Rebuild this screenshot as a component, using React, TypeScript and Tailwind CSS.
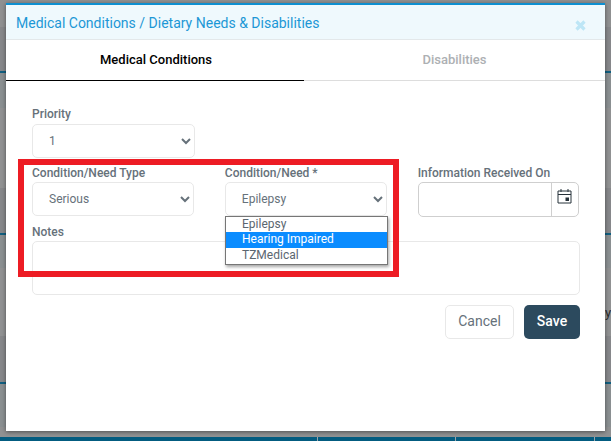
const bands = [
  { h: 'h-[27px]', bg: 'bg-[#8f9091]' },
  { h: 'h-[44px]', bg: 'bg-[#86878a]' },
  { h: 'h-[2px]', bg: 'bg-[#115f80]' },
  { h: 'h-[35px]', bg: 'bg-[#8a8f91]' },
  { h: 'h-[80px]', bg: 'bg-[#909192]' },
  { h: 'h-[45px]', bg: 'bg-[#86878a]' },
  { h: 'h-[2px]', bg: 'bg-[#115f80]' },
  { h: 'h-[33px]', bg: 'bg-[#8a8f91]' },
  { h: 'h-[68px]', bg: 'bg-[#909192]' },
  { h: 'h-[46px]', bg: 'bg-[#86878a]' },
  { h: 'h-[2px]', bg: 'bg-[#115f80]' },
  { h: 'h-[43px]', bg: 'bg-[#8a8f91]' },
  { h: 'h-[10px]', bg: 'bg-[#909192]' },
]

const labelClass = 'block h-[18px] leading-[18px] font-medium'
const selectClass = 'block w-full h-[34px] pl-[12px] bg-white border border-[#e8e8e8] rounded-[5px] text-[12px]'

export default function App() {
  return (
    <div className="relative w-[611px] h-[441px] overflow-hidden bg-[#8f9192] font-['Roboto',sans-serif]">
      {/* page behind the dimmed overlay */}
      <div className="flex flex-col h-full">
        {bands.map((band, i) => (
          <div key={i} className={`${band.h} ${band.bg}`}></div>
        ))}
        <div className="flex flex-1 bg-[#035c80]">
          <div className="w-[318px] border-r border-[#9aa5ab]"></div>
          <div className="w-[138px] border-r border-[#9aa5ab]"></div>
          <div className="w-[139px] border-r border-[#9aa5ab]"></div>
        </div>
      </div>
      <div className="absolute right-0 top-[303px] w-[6px] overflow-hidden text-[13px] text-[#2b2b2b]">y</div>

      {/* modal */}
      <div className="absolute left-[6px] top-[3px] w-[599px] h-[428px] bg-white border-t-2 border-[#0d8fd0] shadow-[0_1px_4px_rgba(0,0,0,0.45)]">
        <div className="flex items-center justify-between h-[35px] pl-[10px] pr-[19px] bg-[#eff9fd] border-b border-[#e3e8ea]">
          <span className="mt-[2px] text-[14px] text-[#1c97d6]">Medical Conditions / Dietary Needs &amp; Disabilities</span>
          <svg width="11" height="11" viewBox="0 0 11 11" className="mt-[7px]">
            <path d="M1.5 1.5 9.5 9.5M9.5 1.5 1.5 9.5" stroke="#bde6f6" strokeWidth="3.2" />
          </svg>
        </div>

        <div className="flex h-[41px]">
          <div className="w-[298px] pl-[2px] flex items-center justify-center border-b-[1.5px] border-black text-[13px] font-medium text-black">
            Medical Conditions
          </div>
          <div className="flex-1 flex items-center justify-center border-b-[1.5px] border-[#dddddd] text-[13px] font-medium text-[#adb0b3]">
            Disabilities
          </div>
        </div>

        <div className="pl-[26px] pr-[25px] pt-[24px] text-[12px] text-[#66717a]">
          <label className={`${labelClass} mb-px`}>Priority</label>
          <div className="w-[162.5px]">
            <select className={selectClass}>
              <option>1</option>
            </select>
          </div>

          <div className="grid grid-cols-3 gap-x-[30.5px] mt-[6px]">
            <div>
              <label className={labelClass}>Condition/Need Type</label>
              <select className={selectClass}>
                <option>Serious</option>
              </select>
            </div>
            <div>
              <label className={labelClass}>Condition/Need *</label>
              <select className={selectClass}>
                <option>Epilepsy</option>
              </select>
            </div>
            <div>
              <label className={labelClass}>Information Received On</label>
              <div className="flex h-[35px] mr-px border border-[#cfcfcf] rounded-[5px]">
                <div className="flex-1"></div>
                <div className="flex w-[27px] items-center justify-center border-l border-[#cfcfcf]">
                  <svg width="15" height="16" viewBox="0 0 15 16" fill="none" className="mb-[7px]">
                    <path d="M1 3h13v12H1zM1 6.5h13M4 1v3M11 1v3" stroke="#27323a" strokeWidth="1" />
                    <rect x="8.5" y="9.5" width="3.5" height="3.5" fill="#27323a" />
                  </svg>
                </div>
              </div>
            </div>
          </div>

          <label className={`${labelClass} mt-[6px]`}>Notes</label>
          <div className="h-[54px] border border-[#e8e8e8] rounded-[5px]"></div>

          <div className="flex justify-end gap-[10px] mt-[10px]">
            <button className="w-[69px] h-[34px] pb-[2px] border border-[#e8e8e8] rounded-[5px] text-[14px] text-[#66717a]">Cancel</button>
            <button className="w-[56px] h-[34px] pb-[2px] bg-[#2c4a5e] rounded-[5px] text-[14px] font-medium text-white">Save</button>
          </div>
        </div>
      </div>

      {/* red annotation */}
      <div className="absolute left-[18px] top-[159px] w-[381px] h-[118px] border-[6px] border-[#ed1c24]"></div>

      {/* open select list */}
      <ul className="absolute left-[225px] top-[216px] w-[163px] bg-white border border-[#767676] shadow-[1px_2px_3px_rgba(0,0,0,0.35)] text-[12px] text-[#5b6670]">
        <li className="pl-[16px] h-[15px] leading-[15px]">Epilepsy</li>
        <li className="pl-[16px] h-[16px] leading-[15px] bg-[#0a8cff] text-white">Hearing Impaired</li>
        <li className="pl-[16px] h-[16px] leading-[15px]">TZMedical</li>
      </ul>
    </div>
  )
}
